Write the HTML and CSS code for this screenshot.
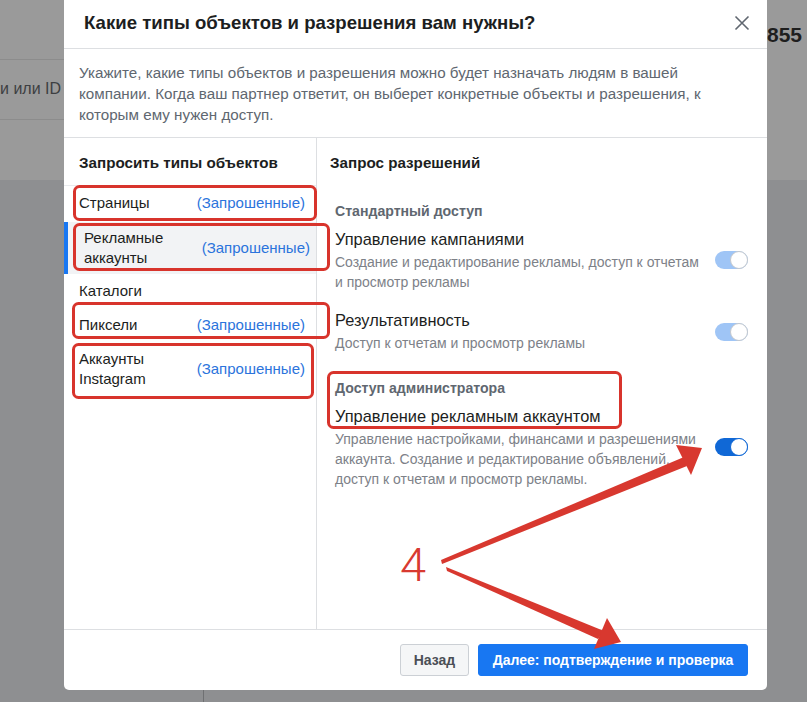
FILE: index.html
```html
<!DOCTYPE html>
<html lang="ru">
<head>
<meta charset="utf-8">
<title>Запрос доступа</title>
<link rel="stylesheet" href="styles.css">
</head>
<body>
<div class="page">
  <div class="bg-top">
    <div class="bg-rows">
      <div class="bg-row"></div>
      <div class="bg-row"><span class="bg-text">и или ID</span></div>
      <div class="bg-row"></div>
    </div>
    <div class="bg-num">855</div>
  </div>
  <div class="bg-bottom"><div class="bg-col"></div></div>

  <div class="modal">
    <div class="modal-header">
      <h1 class="modal-title">Какие типы объектов и разрешения вам нужны?</h1>
      <span class="close">
        <svg width="16" height="16" viewBox="0 0 16 16"><path d="M1.5 1.5 L14.5 14.5 M14.5 1.5 L1.5 14.5" stroke="#606770" stroke-width="1.6" fill="none"/></svg>
      </span>
    </div>
    <div class="modal-desc">
      <p>Укажите, какие типы объектов и разрешения можно будет назначать людям в вашей компании. Когда ваш партнер ответит, он выберет конкретные объекты и разрешения, к которым ему нужен доступ.</p>
    </div>
    <div class="modal-body">
      <div class="types">
        <div class="types-title">Запросить типы объектов</div>
        <div class="type-item"><span class="type-name">Страницы</span><span class="type-req">(Запрошенные)</span></div>
        <div class="type-item type-item--active"><span class="type-name">Рекламные<br>аккаунты</span><span class="type-req">(Запрошенные)</span></div>
        <div class="type-item"><span class="type-name">Каталоги</span></div>
        <div class="type-item"><span class="type-name">Пиксели</span><span class="type-req">(Запрошенные)</span></div>
        <div class="type-item"><span class="type-name">Аккаунты<br>Instagram</span><span class="type-req">(Запрошенные)</span></div>
      </div>
      <div class="perms">
        <div class="perms-title">Запрос разрешений</div>
        <div class="perm-group">
          <div class="group-title">Стандартный доступ</div>
          <div class="perm-row">
            <div class="perm-text">
              <div class="perm-name">Управление кампаниями</div>
              <div class="perm-desc">Создание и редактирование рекламы, доступ к отчетам и просмотр рекламы</div>
            </div>
            <span class="toggle toggle--muted"><span class="knob"></span></span>
          </div>
          <div class="perm-row">
            <div class="perm-text">
              <div class="perm-name">Результативность</div>
              <div class="perm-desc">Доступ к отчетам и просмотр рекламы</div>
            </div>
            <span class="toggle toggle--muted"><span class="knob"></span></span>
          </div>
        </div>
        <div class="perm-group">
          <div class="group-title">Доступ администратора</div>
          <div class="perm-row">
            <div class="perm-text">
              <div class="perm-name">Управление рекламным аккаунтом</div>
              <div class="perm-desc">Управление настройками, финансами и разрешениями аккаунта. Создание и редактирование объявлений, доступ к отчетам и просмотр рекламы.</div>
            </div>
            <span class="toggle toggle--on"><span class="knob"></span></span>
          </div>
        </div>
      </div>
    </div>
    <div class="modal-footer">
      <button class="btn btn--secondary">Назад</button>
      <button class="btn btn--primary">Далее: подтверждение и проверка</button>
    </div>
  </div>

  <svg class="annot" width="807" height="702" viewBox="0 0 807 702">
    <g fill="none" stroke="#d8342c" stroke-width="3">
      <rect x="74.5" y="186.5" width="241" height="33" rx="5"/>
      <rect x="74.5" y="224.5" width="254" height="45" rx="5"/>
      <rect x="73.5" y="303.5" width="255" height="34" rx="5"/>
      <rect x="73.5" y="344.5" width="239" height="53" rx="5"/>
      <rect x="328.5" y="372.5" width="292" height="55" rx="5"/>
    </g>
    <g fill="#d8382f">
      <polygon points="441,560 684,457 687,466 442,564"/>
      <polygon points="702,448 676,445 691,475"/>
      <polygon points="446,567 447,571 598,639 604,631"/>
      <polygon points="621,642 607,618 594,649"/>
    </g>
  </svg>
  <span class="annot-num">4</span>
</div>
</body>
</html>
```

FILE: styles.css
```css
* { box-sizing: border-box; }

html, body {
  margin: 0;
  padding: 0;
}

body {
  width: 807px;
  height: 702px;
  overflow: hidden;
  font-family: "Liberation Sans", Arial, sans-serif;
  background: #8e8f91;
}

.page {
  position: relative;
  width: 807px;
  height: 702px;
  overflow: hidden;
}

/* background page (dimmed) */
.bg-top {
  height: 180px;
  background: #9a9a9a;
  display: flex;
  justify-content: space-between;
}

.bg-rows {
  width: 64px;
}

.bg-row {
  height: 60px;
  border-bottom: 1px solid #8c8c8c;
  display: flex;
  align-items: center;
  overflow: hidden;
  white-space: nowrap;
}

.bg-row:last-child {
  border-bottom: none;
}

.bg-text {
  font-size: 16px;
  color: #3d3f42;
  margin-top: -2px;
}

.bg-num {
  width: 40px;
  padding-top: 23px;
  font-size: 21px;
  font-weight: bold;
  color: #1e1e1e;
  overflow: hidden;
}

.bg-bottom {
  height: 522px;
  background: #8e8f91;
}

.bg-col {
  width: 204px;
  height: 100%;
  border-right: 1px solid #6f7072;
}

/* modal */
.modal {
  position: absolute;
  left: 64px;
  top: 0;
  width: 703px;
  height: 690px;
  background: #fff;
  border-radius: 0 0 5px 5px;
  display: flex;
  flex-direction: column;
}

.modal-header {
  height: 49px;
  border-bottom: 1px solid #dddfe2;
  display: flex;
  align-items: center;
  justify-content: space-between;
  padding: 0 17px 3px 20px;
}

.modal-title {
  margin: 0;
  font-size: 18.6px;
  font-weight: bold;
  color: #1c1e21;
}

.close {
  display: flex;
  width: 16px;
  height: 16px;
}

.modal-desc {
  padding: 13px 16px 12px 15px;
  border-bottom: 1px solid #dddfe2;
}

.modal-desc p {
  margin: 0;
  max-width: 640px;
  font-size: 15.2px;
  line-height: 21px;
  color: #606770;
}

.modal-body {
  flex: 1;
  display: flex;
}

.types {
  width: 253px;
  border-right: 1px solid #dddfe2;
}

.types-title {
  height: 48px;
  padding: 16px 15px 0;
  font-size: 15.2px;
  line-height: 18px;
  font-weight: bold;
  color: #1c1e21;
  border-bottom: 1px solid #e9ebee;
}

.type-item {
  display: flex;
  align-items: center;
  justify-content: space-between;
  padding: 7px 11px 7px 15px;
  min-height: 34px;
  font-size: 15px;
  line-height: 20px;
  color: #1c1e21;
}

.type-item--active {
  background: #f2f3f5;
  border-left: 4px solid #1877f2;
  padding: 6px 6px 6px 16px;
  min-height: 52px;
  margin-top: 2px;
}

.type-req {
  color: #2b74dc;
}

.perms {
  flex: 1;
  padding: 16px 19px 0 13px;
}

.perms-title {
  font-size: 15.2px;
  line-height: 18px;
  font-weight: bold;
  color: #1c1e21;
}

.perm-group {
  padding-left: 5px;
  margin-top: 30px;
  display: flex;
  flex-direction: column;
  gap: 17px;
}

.perm-group + .perm-group {
  margin-top: 25px;
}

.group-title {
  font-size: 14.1px;
  line-height: 18px;
  font-weight: bold;
  color: #606770;
  margin-bottom: -9px;
}

.perm-row {
  display: flex;
  align-items: center;
  justify-content: space-between;
  gap: 14px;
}

.perm-name {
  font-size: 16.4px;
  line-height: 22px;
  color: #1c1e21;
}

.perm-desc {
  margin-top: 3px;
  font-size: 14px;
  line-height: 19.7px;
  color: #7d8188;
}

.toggle {
  position: relative;
  flex: none;
  width: 33px;
  height: 18px;
  border-radius: 9px;
}

.toggle--muted {
  background: #9fc5f6;
}

.toggle--on {
  background: #1068d6;
}

.knob {
  position: absolute;
  right: 0;
  top: 0;
  width: 18px;
  height: 18px;
  border-radius: 50%;
  background: #fff;
  border: 1px solid #c4c8cd;
}

.toggle--on .knob {
  border-color: #1068d6;
}

.modal-footer {
  height: 61px;
  border-top: 1px solid #dddfe2;
  display: flex;
  justify-content: flex-end;
  align-items: flex-start;
  gap: 9px;
  padding: 14px 19px 0;
}

.btn {
  height: 32px;
  border-radius: 3px;
  font-family: "Liberation Sans", Arial, sans-serif;
  font-size: 14px;
  font-weight: bold;
  padding: 0 12px;
  cursor: pointer;
}

.btn--secondary {
  width: 69px;
  background: #f5f6f7;
  border: 1px solid #ccd0d5;
  color: #4b4f56;
}

.btn--primary {
  width: 270px;
  background: #1877f2;
  border: 1px solid #1877f2;
  color: #fff;
}

/* annotations drawn over the screenshot */
.annot {
  position: absolute;
  left: 0;
  top: 0;
  pointer-events: none;
}

.annot-num {
  position: absolute;
  left: 400px;
  top: 537px;
  font-family: Roboto, "Liberation Sans", sans-serif;
  font-weight: 300;
  font-size: 47px;
  line-height: 56px;
  color: #d83a31;
}
```
